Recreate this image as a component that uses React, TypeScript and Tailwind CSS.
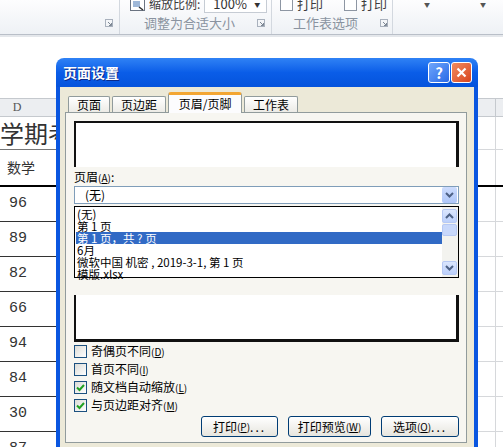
import type { ReactNode } from "react";

const scores = ["96", "89", "82", "66", "94", "84", "30", "87"];

// little dialog-launcher glyph in ribbon group corners
const Launcher = () => (
  <svg width="8" height="8" viewBox="0 0 8 8" className="shrink-0">
    <rect x="0.5" y="0.5" width="7" height="7" fill="none" stroke="#a9b1bd" />
    <path d="M3 3 L6.5 6.5 M4 6.5 H6.5 V4" stroke="#7d8794" fill="none" />
  </svg>
);

const Ribbon = () => (
  <div className="flex h-[34px] overflow-hidden whitespace-nowrap bg-gradient-to-b from-[#fdfdfe] to-[#eef1f5] text-[13px] text-[#8a93a0]">
    <div className="flex w-[120px] shrink-0 flex-col border-r border-[#d3d8df]">
      <div className="-mt-[5px] h-[18px]" />
      <div className="flex h-[20px] items-center justify-end pr-[6px]">
        <Launcher />
      </div>
    </div>
    <div className="flex w-[152px] shrink-0 flex-col border-r border-[#d3d8df]">
      <div className="-mt-[5px] flex h-[18px] items-center pl-[10px]">
        <svg width="15" height="13" viewBox="0 0 15 13" className="shrink-0">
          <rect x="0.5" y="0.5" width="14" height="12" fill="#fff" stroke="#6a7381" />
          <rect x="3" y="3" width="7" height="6" fill="#9fb8d8" />
          <path d="M9 9 L13 12" stroke="#333" strokeWidth="1.5" />
        </svg>
        <span className="ml-[4px] shrink-0 text-[12px] text-[#3b3b3b]">缩放比例:</span>
        <div className="ml-[4px] flex h-[18px] w-[63px] shrink-0 items-center justify-between border border-[#c6ccd4] bg-white pl-[8px] pr-[6px] text-[#333]">
          <span>100%</span>
          <span className="text-[6px]">▼</span>
        </div>
      </div>
      <div className="flex h-[20px] items-center justify-between pl-[24px] pr-[6px]">
        <span>调整为合适大小</span>
        <Launcher />
      </div>
    </div>
    <div className="flex w-[121px] shrink-0 flex-col border-r border-[#d3d8df]">
      <div className="-mt-[5px] flex h-[18px] items-center pl-[8px] text-[#3b3b3b]">
        <span className="h-[13px] w-[13px] shrink-0 border border-[#8d96a3] bg-white" />
        <span className="ml-[4px]">打印</span>
        <span className="ml-[21px] h-[13px] w-[13px] shrink-0 border border-[#8d96a3] bg-white" />
        <span className="ml-[4px]">打印</span>
      </div>
      <div className="flex h-[20px] items-center justify-between pl-[21px] pr-[4px]">
        <span>工作表选项</span>
        <Launcher />
      </div>
    </div>
    <div className="flex flex-1 flex-col">
      <div className="-mt-[5px] flex h-[18px] items-center pl-[31px] text-[6px] text-[#555]">
        <span>▼</span>
        <span className="ml-[50px]">▼</span>
      </div>
    </div>
  </div>
);

const SheetRow = ({ h, dark, children }: { h: string; dark: string; children?: ReactNode }) => (
  <div className={`flex ${h}`}>
    <div className={`flex w-[300px] items-center border-b ${dark}`}>{children}</div>
    <div className="w-[195px] border-b border-[#d6d8db]" />
    <div className="flex-1 border-b border-l border-[#d6d8db]" />
  </div>
);

const Sheet = () => (
  <div className="flex flex-col">
    <div className="flex h-[19px] border-y border-[#c5c9ce] bg-[#eceef1] text-[12px] text-[#555]">
      <div className="w-[34px] text-center leading-[17px] font-['Liberation_Serif',serif]">D</div>
      <div className="w-[461px]" />
      <div className="flex-1 border-l border-[#c5c9ce]" />
    </div>
    <div className="flex h-[33px]">
      <div className="flex w-[300px] items-center overflow-hidden whitespace-nowrap border-b border-[#777] text-[24px] leading-none text-[#333]">
        学期考试成绩表
      </div>
      <div className="w-[195px] border-b border-[#d6d8db]" />
      <div className="flex-1 border-b border-l border-[#d6d8db]" />
    </div>
    <div className="flex h-[37px] border-b-2 border-black">
      <div className="flex w-[300px] items-center pl-[7px] text-[14px] text-[#333]">数学</div>
      <div className="w-[195px]" />
      <div className="flex-1 border-l border-[#d6d8db]" />
    </div>
    {scores.map((s) => (
      <SheetRow key={s} h="h-[35px]" dark="border-[#333]">
        <span className="pl-[9px] font-['Liberation_Mono',monospace] text-[15px] text-[#333]">{s}</span>
      </SheetRow>
    ))}
  </div>
);

const Mnemonic = ({ k }: { k: string }) => (
  <span className="text-[10px]">
    (<span className="underline">{k}</span>)
  </span>
);

const Tab = ({ label, active }: { label: string; active?: boolean }) =>
  active ? (
    <div className="relative z-10 flex h-[21px] w-[74px] items-center justify-center rounded-t-[3px] border-x border-t-[3px] border-x-[#919b9c] border-t-[#f3a633] bg-[#fcfcfe] text-[12px]">
      {label}
    </div>
  ) : (
    <div className="relative z-10 mb-[1px] flex h-[16px] items-center justify-center rounded-t-[2px] border-x border-t border-[#919b9c] bg-gradient-to-b from-white to-[#ecebe6] px-[8px] text-[12px]">
      {label}
    </div>
  );

const Chevron = ({ up }: { up?: boolean }) => (
  <svg width="9" height="6" viewBox="0 0 9 6">
    <path d={up ? "M1 5 L4.5 1.5 L8 5" : "M1 1 L4.5 4.5 L8 1"} stroke="#4d6185" strokeWidth="2" fill="none" />
  </svg>
);

const ScrollBtn = ({ up, className }: { up?: boolean; className?: string }) => (
  <div
    className={`flex h-[14px] w-[15px] items-center justify-center rounded-[2px] border border-[#b7c9f4] bg-gradient-to-b from-[#dbe6fd] to-[#bcd0fb] ${className ?? ""}`}
  >
    <Chevron up={up} />
  </div>
);

const CheckRow = ({ label, k, checked }: { label: string; k: string; checked?: boolean }) => (
  <div className="flex h-[18px] items-center">
    <span className="flex h-[13px] w-[13px] items-center justify-center border border-[#1c5180] bg-gradient-to-br from-[#dcdcd7] to-white">
      {checked && (
        <svg width="9" height="9" viewBox="0 0 9 9">
          <path d="M1 4.5 L3.5 7 L8 2" stroke="#21a121" strokeWidth="2" fill="none" />
        </svg>
      )}
    </span>
    <span className="ml-[4px] text-[12px] text-black">
      {label}
      <Mnemonic k={k} />
    </span>
  </div>
);

const XpButton = ({ children, w }: { children: ReactNode; w: string }) => (
  <div
    className={`flex h-[21px] ${w} items-center justify-center rounded-[3px] border border-[#003c74] bg-gradient-to-b from-white to-[#e6e5de] text-[12px] text-black`}
  >
    {children}
  </div>
);

const listItems = ["(无)", "第 1 页", "第 1 页，共 ? 页", "6月", "微软中国 机密 , 2019-3-1,  第 1 页", "模版.xlsx"];

const PageSetup = () => (
  <div className="absolute left-[56px] top-[58px] w-[422px]">
    <div className="flex h-[29px] items-center justify-between rounded-t-[8px] bg-gradient-to-b from-[#2f82f5] via-[#0a5de8] to-[#0553dc] pl-[7px] pr-[6px]">
      <span className="text-[14px] font-bold text-white [text-shadow:1px_1px_0_#0a2a8a]">页面设置</span>
      <div className="flex gap-[1px]">
        <div className="flex h-[21px] w-[22px] items-center justify-center rounded-[3px] border border-white bg-gradient-to-br from-[#6ea6fb] to-[#2a68e6] text-[15px] font-bold leading-none text-white">
          ?
        </div>
        <div className="flex h-[21px] w-[21px] items-center justify-center rounded-[3px] border border-white bg-gradient-to-br from-[#f08a5e] to-[#d8431c]">
          <svg width="11" height="11" viewBox="0 0 11 11">
            <path d="M1.5 1.5 L9.5 9.5 M9.5 1.5 L1.5 9.5" stroke="#fff" strokeWidth="2.2" />
          </svg>
        </div>
      </div>
    </div>
    <div className="border-x-4 border-[#0a56e0] bg-[#ece9d8] pb-[8px] pl-[5px] pr-[7px] pt-[5px] font-['Noto_Sans_CJK_SC',sans-serif]">
      <div className="flex h-[21px] items-end gap-[2px] pl-[3px]">
        <Tab label="页面" />
        <Tab label="页边距" />
        <Tab label="页眉/页脚" active />
        <Tab label="工作表" />
      </div>
      <div className="-mt-[1px] border border-[#919b9c] bg-[#f7f6f1] pb-[5px] pl-[8px] pr-[7px] pt-[8px]">
        <div className="h-[46px] border-l-2 border-r-[3px] border-t-2 border-[#111] bg-white" />
        <div className="mt-[2px] h-[16px] text-[12px] leading-[16px]">
          页眉<Mnemonic k="A" />:
        </div>
        <div className="mt-[1px] flex h-[18px] items-center justify-between border border-[#7f9db9] bg-white pl-[10px] pr-[1px] text-[12px]">
          <span>(无)</span>
          <div className="flex h-[16px] w-[15px] items-center justify-center rounded-[2px] bg-gradient-to-b from-[#cddcfd] to-[#aec6f8]">
            <Chevron />
          </div>
        </div>
        <div className="mt-[2px] flex h-[72px] border border-black bg-white">
          <div className="flex flex-1 flex-col pl-[1px] pt-[1px] text-[11.5px] leading-[12px]">
            {listItems.map((t, i) => (
              <div
                key={t}
                className={`h-[12px] whitespace-nowrap pl-[1px] ${i === 2 ? "bg-[#316ac5] text-white" : "text-black"}`}
              >
                {t}
              </div>
            ))}
          </div>
          <div className="flex w-[16px] flex-col bg-[#f3f3ef] pt-[2px]">
            <ScrollBtn up />
            <div className="mt-[1px] h-[12px] w-[15px] rounded-[2px] border border-[#b7c9f4] bg-[#c8d8fb]" />
            <div className="flex-1" />
            <ScrollBtn className="mb-[2px]" />
          </div>
        </div>
        <div className="mt-[17px] h-[47px] border-b-[3px] border-l-2 border-r-[3px] border-[#111] bg-white" />
        <CheckRow label="奇偶页不同" k="D" />
        <CheckRow label="首页不同" k="I" />
        <CheckRow label="随文档自动缩放" k="L" checked />
        <CheckRow label="与页边距对齐" k="M" checked />
        <div className="mt-[2px] flex justify-end gap-[10px]">
          <XpButton w="w-[77px]">
            打印<Mnemonic k="P" />
            <span className="tracking-[2px]">...</span>
          </XpButton>
          <XpButton w="w-[83px]">
            打印预览<Mnemonic k="W" />
          </XpButton>
          <XpButton w="w-[78px]">
            选项<Mnemonic k="O" />
            <span className="tracking-[2px]">...</span>
          </XpButton>
        </div>
      </div>
    </div>
  </div>
);

export default function App() {
  return (
    <div className="relative h-[447px] w-[503px] overflow-hidden bg-white font-['Noto_Sans_CJK_SC',sans-serif]">
      <Ribbon />
      <div className="h-[3px] border-t border-[#b9bfc8] bg-[#e4e7eb]" />
      <div className="h-[61px]" />
      <Sheet />
      <PageSetup />
    </div>
  );
}
